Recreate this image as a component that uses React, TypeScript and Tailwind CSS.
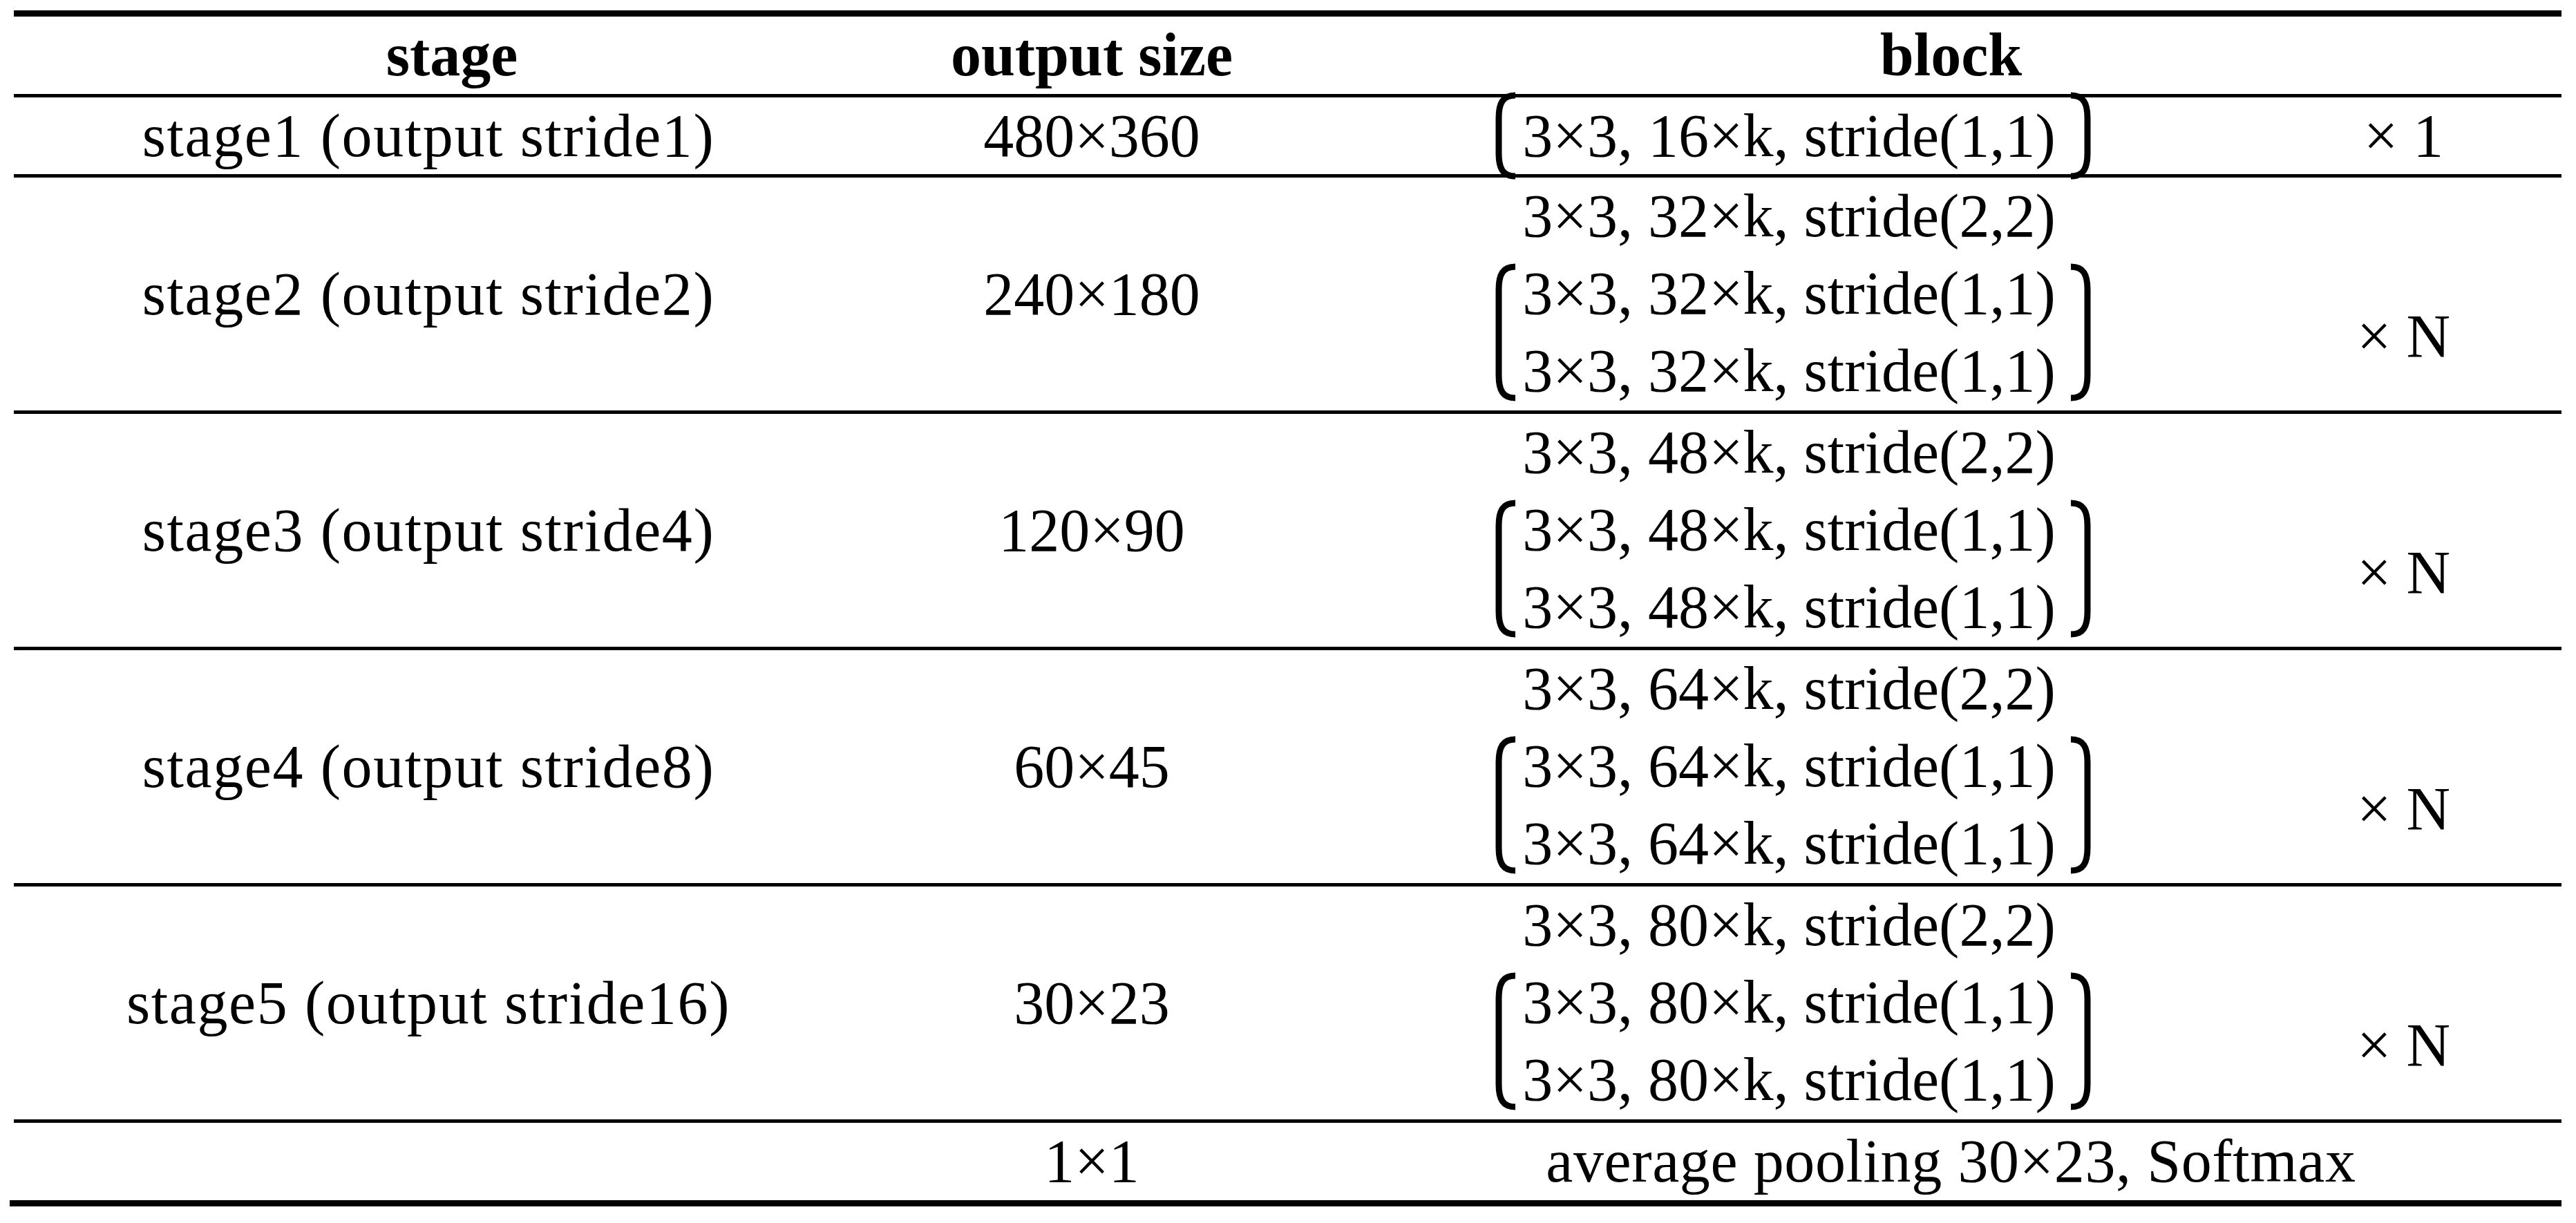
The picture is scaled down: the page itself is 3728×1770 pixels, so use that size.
import React from "react";

function Bracket({ side, h }: { side: "l" | "r"; h: number }) {
  const d =
    side === "l"
      ? `M30 5 C12 5 6 16 6 38 L6 ${h - 38} C6 ${h - 16} 12 ${h - 5} 30 ${h - 5}`
      : `M4 5 C22 5 28 16 28 38 L28 ${h - 38} C28 ${h - 16} 22 ${h - 5} 4 ${h - 5}`;
  return (
    <svg width={34} height={h} viewBox={`0 0 34 ${h}`} className="shrink-0 block">
      <path d={d} fill="none" stroke="#000" strokeWidth={9} />
    </svg>
  );
}

const Line = ({ children }: { children: React.ReactNode }) => (
  <div className="h-[112px] leading-[112px] whitespace-nowrap">{children}</div>
);

const Sep = () => <div className="h-[5px] bg-black w-full" />;

const stages = [
  { stage: "stage2 (output stride2)", size: "240×180", c: "32" },
  { stage: "stage3 (output stride4)", size: "120×90", c: "48" },
  { stage: "stage4 (output stride8)", size: "60×45", c: "64" },
  { stage: "stage5 (output stride16)", size: "30×23", c: "80" },
];

const grid = "grid grid-cols-[1200px_720px_1310px_457px]";

export default function App() {
  return (
    <div className="w-[3728px] h-[1770px] bg-white text-black font-['Liberation_Serif',serif] text-[88px] pt-[15px]">
      <div className="w-[3687px] ml-[20px]">
        <div className="h-[9px] bg-black" />
        {/* header */}
        <div className={`${grid} h-[112px] leading-[112px] font-bold`}>
          <div className="text-center pl-[68px]">stage</div>
          <div className="text-center">output size</div>
          <div className="col-span-2 text-center">block</div>
        </div>
        <Sep />
        {/* stage1 */}
        <div className={`${grid} h-[111px] leading-[112px]`}>
          <div className="flex items-center justify-center h-[111px] whitespace-nowrap tracking-[1.6px]">stage1 (output stride1)</div>
          <div className="flex items-center justify-center h-[111px]">480×360</div>
          <div className="flex items-center justify-center h-[111px]">
            <div className="flex items-center h-[111px]">
              <Bracket side="l" h={127} />
              <div className="ml-[6px] mr-[18px] whitespace-nowrap">3×3, 16×k, stride(1,1)</div>
              <Bracket side="r" h={127} />
            </div>
          </div>
          <div className="flex items-center justify-center h-[111px]">× 1</div>
        </div>
        {stages.map((s) => (
          <React.Fragment key={s.stage}>
            <Sep />
            <div className={`${grid} h-[337px]`}>
              <div className="flex items-center justify-center tracking-[1.6px]">
                <Line>{s.stage}</Line>
              </div>
              <div className="flex items-center justify-center">
                <Line>{s.size}</Line>
              </div>
              <div className="flex justify-center">
                <div className="flex flex-col">
                  <div className="pl-[40px]">
                    <Line>3×3, {s.c}×k, stride(2,2)</Line>
                  </div>
                  <div className="flex items-center h-[224px]">
                    <Bracket side="l" h={200} />
                    <div className="ml-[6px] mr-[18px] flex flex-col">
                      <Line>3×3, {s.c}×k, stride(1,1)</Line>
                      <Line>3×3, {s.c}×k, stride(1,1)</Line>
                    </div>
                    <Bracket side="r" h={200} />
                  </div>
                </div>
              </div>
              <div className="flex flex-col">
                <div className="h-[124px]" />
                <div className="h-[212px] flex items-center justify-center">
                  <Line>× N</Line>
                </div>
              </div>
            </div>
          </React.Fragment>
        ))}
        <Sep />
        <div className={`${grid} h-[112px] leading-[112px]`}>
          <div />
          <div className="text-center">1×1</div>
          <div className="col-span-2 text-center whitespace-nowrap tracking-[0.6px]">average pooling 30×23, Softmax</div>
        </div>
      </div>
      <div className="h-[9px] bg-black w-[3693px] ml-[14px]" />
    </div>
  );
}
